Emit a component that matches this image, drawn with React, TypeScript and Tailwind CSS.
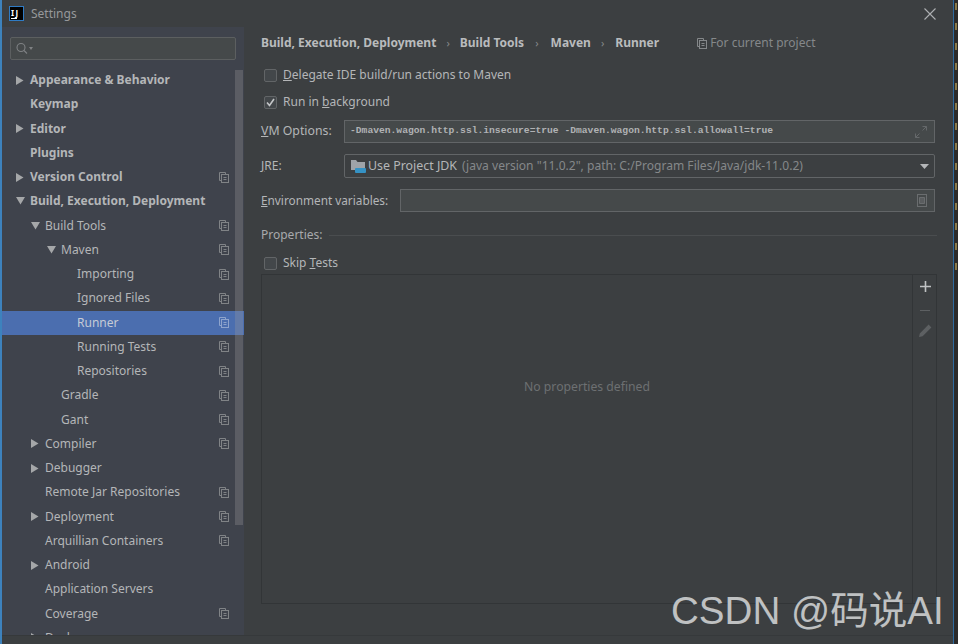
const tree = [
  { label: 'Appearance & Behavior', depth: 0, bold: true, arrow: 'right' },
  { label: 'Keymap', depth: 0, bold: true },
  { label: 'Editor', depth: 0, bold: true, arrow: 'right' },
  { label: 'Plugins', depth: 0, bold: true },
  { label: 'Version Control', depth: 0, bold: true, arrow: 'right', copy: true },
  { label: 'Build, Execution, Deployment', depth: 0, bold: true, arrow: 'down' },
  { label: 'Build Tools', depth: 1, arrow: 'down', copy: true },
  { label: 'Maven', depth: 2, arrow: 'down', copy: true },
  { label: 'Importing', depth: 3, copy: true },
  { label: 'Ignored Files', depth: 3, copy: true },
  { label: 'Runner', depth: 3, copy: true, selected: true },
  { label: 'Running Tests', depth: 3, copy: true },
  { label: 'Repositories', depth: 3, copy: true },
  { label: 'Gradle', depth: 2, copy: true },
  { label: 'Gant', depth: 2, copy: true },
  { label: 'Compiler', depth: 1, arrow: 'right', copy: true },
  { label: 'Debugger', depth: 1, arrow: 'right' },
  { label: 'Remote Jar Repositories', depth: 1, copy: true },
  { label: 'Deployment', depth: 1, arrow: 'right', copy: true },
  { label: 'Arquillian Containers', depth: 1, copy: true },
  { label: 'Android', depth: 1, arrow: 'right' },
  { label: 'Application Servers', depth: 1 },
  { label: 'Coverage', depth: 1, copy: true },
  { label: 'Docker', depth: 1, arrow: 'right' },
];

const indents = ['pl-[14px]', 'pl-[29px]', 'pl-[45px]', 'pl-[61px]'];

function CopyIcon({ className = '' }: { className?: string }) {
  return (
    <svg width="10" height="11" viewBox="0 0 10 11" fill="none" stroke="currentColor" className={className}>
      <path d="M2.5 8.5h-2v-8h6v2" />
      <rect x="2.5" y="2.5" width="7" height="8" />
      <path d="M4.5 5.5h3M4.5 7.5h3" />
    </svg>
  );
}

function Arrow({ dir }: { dir?: string }) {
  return (
    <span className="flex w-[14px] shrink-0 items-center">
      {dir === 'right' && (
        <svg width="8" height="9" viewBox="0 0 8 9">
          <path d="M0 0l7.5 4.5L0 9z" fill="#a5a7a9" />
        </svg>
      )}
      {dir === 'down' && (
        <svg width="9" height="8" viewBox="0 0 9 8">
          <path d="M0 0h9L4.5 7.5z" fill="#a5a7a9" />
        </svg>
      )}
    </span>
  );
}

function Sidebar() {
  return (
    <aside className="relative flex h-[608px] w-[242px] shrink-0 flex-col bg-[#3f434c]">
      <div className="mx-[8px] mt-[10px] flex h-[23px] w-[226px] shrink-0 items-center gap-[1px] rounded-[2px] border border-[#5c5f60] bg-[#45494a] pl-[5px] text-[#7f8284]">
        <svg width="12" height="13" viewBox="0 0 12 13" fill="none" stroke="currentColor" strokeWidth="1.1">
          <circle cx="5" cy="5.5" r="4" />
          <path d="M8 8.5l3 3" />
        </svg>
        <svg width="4" height="3" viewBox="0 0 4 3">
          <path d="M0 0h4L2 3z" fill="currentColor" />
        </svg>
      </div>
      <div className="mt-[8px] flex-1 overflow-hidden">
        {tree.map((row) => (
          <div
            key={row.label}
            className={`flex h-[24.25px] shrink-0 items-center pr-[15px] text-[12px] ${indents[row.depth]} ${row.selected ? 'bg-[#4b6eaf] text-[#c5cbd6]' : 'text-[#b4b6b8]'} ${row.bold ? 'font-bold' : ''}`}
          >
            <Arrow dir={row.arrow} />
            <span className="whitespace-nowrap">{row.label}</span>
            {row.copy && <CopyIcon className={`ml-auto ${row.selected ? 'text-[#8ea4cc]' : 'text-[#808386]'}`} />}
          </div>
        ))}
      </div>
      <div className="absolute left-[233px] top-[43px] h-[455px] w-[8px] bg-[#9a9a9a]/30" />
    </aside>
  );
}

function Check({ checked, label }: { checked?: boolean; label: React.ReactNode }) {
  return (
    <div className="flex h-[20px] items-center gap-[6px] pl-[3px] text-[12px] text-[#b4b6b8]">
      <span className="flex h-[13px] w-[13px] items-center justify-center rounded-[2px] border border-[#626567] bg-[#43474a]">
        {checked && (
          <svg width="9" height="9" viewBox="0 0 9 9" fill="none" stroke="#c4c6c8" strokeWidth="1.6">
            <path d="M1 4.5l2.5 3L8 1" />
          </svg>
        )}
      </span>
      <span>{label}</span>
    </div>
  );
}

function Main() {
  return (
    <main className="flex h-[608px] min-w-0 flex-1 flex-col pl-[17px] pr-[16px] text-[12px] text-[#b4b6b8]">
      <div className="mt-[6px] flex h-[20px] items-center whitespace-nowrap">
        <b className="text-[#b9bbbd]">Build, Execution, Deployment</b>
        <span className="mx-[10px] text-[11px] text-[#85888a]">›</span>
        <b className="text-[#b9bbbd]">Build Tools</b>
        <span className="ml-[11px] mr-[12px] text-[11px] text-[#85888a]">›</span>
        <b className="text-[#b9bbbd]">Maven</b>
        <span className="ml-[10px] mr-[11px] text-[11px] text-[#85888a]">›</span>
        <b className="text-[#b9bbbd]">Runner</b>
        <CopyIcon className="ml-[38px] text-[#85888a]" />
        <span className="ml-[3px] text-[#85888a]">For current project</span>
      </div>

      <div className="mt-[12px]">
        <Check label={<><u>D</u>elegate IDE build/run actions to Maven</>} />
      </div>
      <div className="mt-[7px]">
        <Check checked label={<>Run in <u>b</u>ackground</>} />
      </div>

      <div className="mt-[8px] flex h-[23px] items-center pr-[2px]">
        <span className="w-[83px] shrink-0 text-[12.3px]"><u>V</u>M Options:</span>
        <div className="flex h-full flex-1 items-center justify-between border border-[#626567] bg-[#45494a] pl-[5px] pr-[7px]">
          <span className="whitespace-nowrap font-['Liberation_Mono',monospace] text-[9.67px] font-bold text-[#b0b2b4]">
            -Dmaven.wagon.http.ssl.insecure=true -Dmaven.wagon.http.ssl.allowall=true
          </span>
          <svg width="12" height="12" viewBox="0 0 12 12" fill="none" stroke="#65686a">
            <path d="M7.5.5h4v4M11.5.5l-4 4M4.5 11.5h-4v-4M.5 11.5l4-4" />
          </svg>
        </div>
      </div>

      <div className="mt-[11px] flex h-[24px] items-center pr-[2px]">
        <span className="w-[83px] shrink-0"><u>J</u>RE:</span>
        <div className="flex h-full flex-1 items-center rounded-[2px] border border-[#626567] bg-[#3c3f41] pl-[6px] pr-[5px]">
          <svg width="15" height="14" viewBox="0 0 15 14" className="mr-[2px] shrink-0">
            <path d="M0 1h5l1.5 2H14v8H0z" fill="#9ea3a8" />
            <rect x="4" y="9" width="11" height="5" rx="1" fill="#3592c4" />
          </svg>
          <span className="whitespace-nowrap text-[12.4px]">Use Project JDK</span>
          <span className="ml-[5px] whitespace-nowrap text-[12.07px] text-[#85888a]">(java version "11.0.2", path: C:/Program Files/Java/jdk-11.0.2)</span>
          <svg width="9" height="5" viewBox="0 0 9 5" className="ml-auto shrink-0">
            <path d="M0 0h9L4.5 5z" fill="#b4b6b8" />
          </svg>
        </div>
      </div>

      <div className="mt-[11px] flex h-[23px] items-center pr-[2px]">
        <span className="w-[139px] shrink-0 whitespace-nowrap text-[11.8px]"><u>E</u>nvironment variables:</span>
        <div className="flex h-full flex-1 items-center justify-end border border-[#626567] bg-[#45494a] pr-[7px]">
          <svg width="10" height="13" viewBox="0 0 10 13" fill="none" stroke="#6a6d6f">
            <rect x=".5" y=".5" width="9" height="12" />
            <path d="M2.5 3.5h5v6h-5z" fill="#5a5d5f" />
          </svg>
        </div>
      </div>

      <div className="mt-[13px] flex h-[20px] items-center gap-[6px]">
        <span className="text-[#a8aaac]">Properties:</span>
        <span className="h-px flex-1 bg-[#4a4d4f]" />
      </div>

      <div className="mt-[8px]">
        <Check label={<>Skip <u>T</u>ests</>} />
      </div>

      <div className="mt-[1px] flex h-[330px] border border-[#323537]">
        <div className="flex flex-1 justify-center pt-[103px] text-[12.2px] text-[#6d7072]">No properties defined</div>
        <div className="flex w-[24px] flex-col items-center gap-[13px] border-l border-[#323537] pl-[1px] pt-[6px]">
          <svg width="11" height="11" viewBox="0 0 11 11" stroke="#c0c2c4" strokeWidth="1.6">
            <path d="M5.5 0v11M0 5.5h11" />
          </svg>
          <svg width="10" height="1" viewBox="0 0 10 1" stroke="#5d6062" className="mt-[5px]">
            <path d="M0 .5h10" />
          </svg>
          <svg width="13" height="13" viewBox="0 0 13 13">
            <path d="M0 13l.8-3.6L9.6.6l2.8 2.8-8.8 8.8zM10.2 0l2.8 2.8" fill="#5d6062" />
          </svg>
        </div>
      </div>
    </main>
  );
}

export default function App() {
  const dots = Array.from({ length: 14 }, (_, i) => i);
  return (
    <div className="relative flex h-[644px] w-[958px] overflow-hidden bg-[#3c3f41] font-['Noto_Sans','Noto_Sans_CJK_SC',sans-serif]">
      <div className="w-[2px] shrink-0 bg-[#3d82bd]" />
      <div className="flex min-w-0 flex-1 flex-col">
        <header className="flex h-[27px] shrink-0 items-center pl-[7px] pr-[17px]">
          <span className="flex h-[15px] w-[15px] flex-col justify-center border border-[#2f7bc4] bg-black pl-[1px]">
            <span className="text-[8px] font-bold leading-[8px] tracking-[1.5px] text-white">IJ</span>
            <span className="mt-[1px] h-[1px] w-[6px] bg-white" />
          </span>
          <span className="ml-[7px] text-[12px] text-[#97999b]">Settings</span>
          <svg width="12" height="12" viewBox="0 0 12 12" stroke="#aeb0b2" strokeWidth="1.1" className="ml-auto">
            <path d="M.5.5l11 11M11.5.5l-11 11" />
          </svg>
        </header>
        <div className="flex">
          <Sidebar />
          <Main />
        </div>
        <div className="flex-1 border-t border-[#36393b]" />
      </div>
      <div className="flex w-[5px] shrink-0 flex-col gap-[13px] border-l border-[#2e6a9e] bg-[#2b2b2b] pl-[1px] pt-[3px]">
        {dots.map((i) => (
          <span key={i} className="h-[7px] w-[2px] shrink-0 bg-[#8a7a4a]" />
        ))}
      </div>
      <span className="absolute left-[671px] top-[589px] whitespace-nowrap font-['Liberation_Sans','Noto_Sans_CJK_SC',sans-serif] text-[38.6px] leading-[44px] text-[#bfc1c2]">
        CSDN @码说AI
      </span>
    </div>
  );
}
